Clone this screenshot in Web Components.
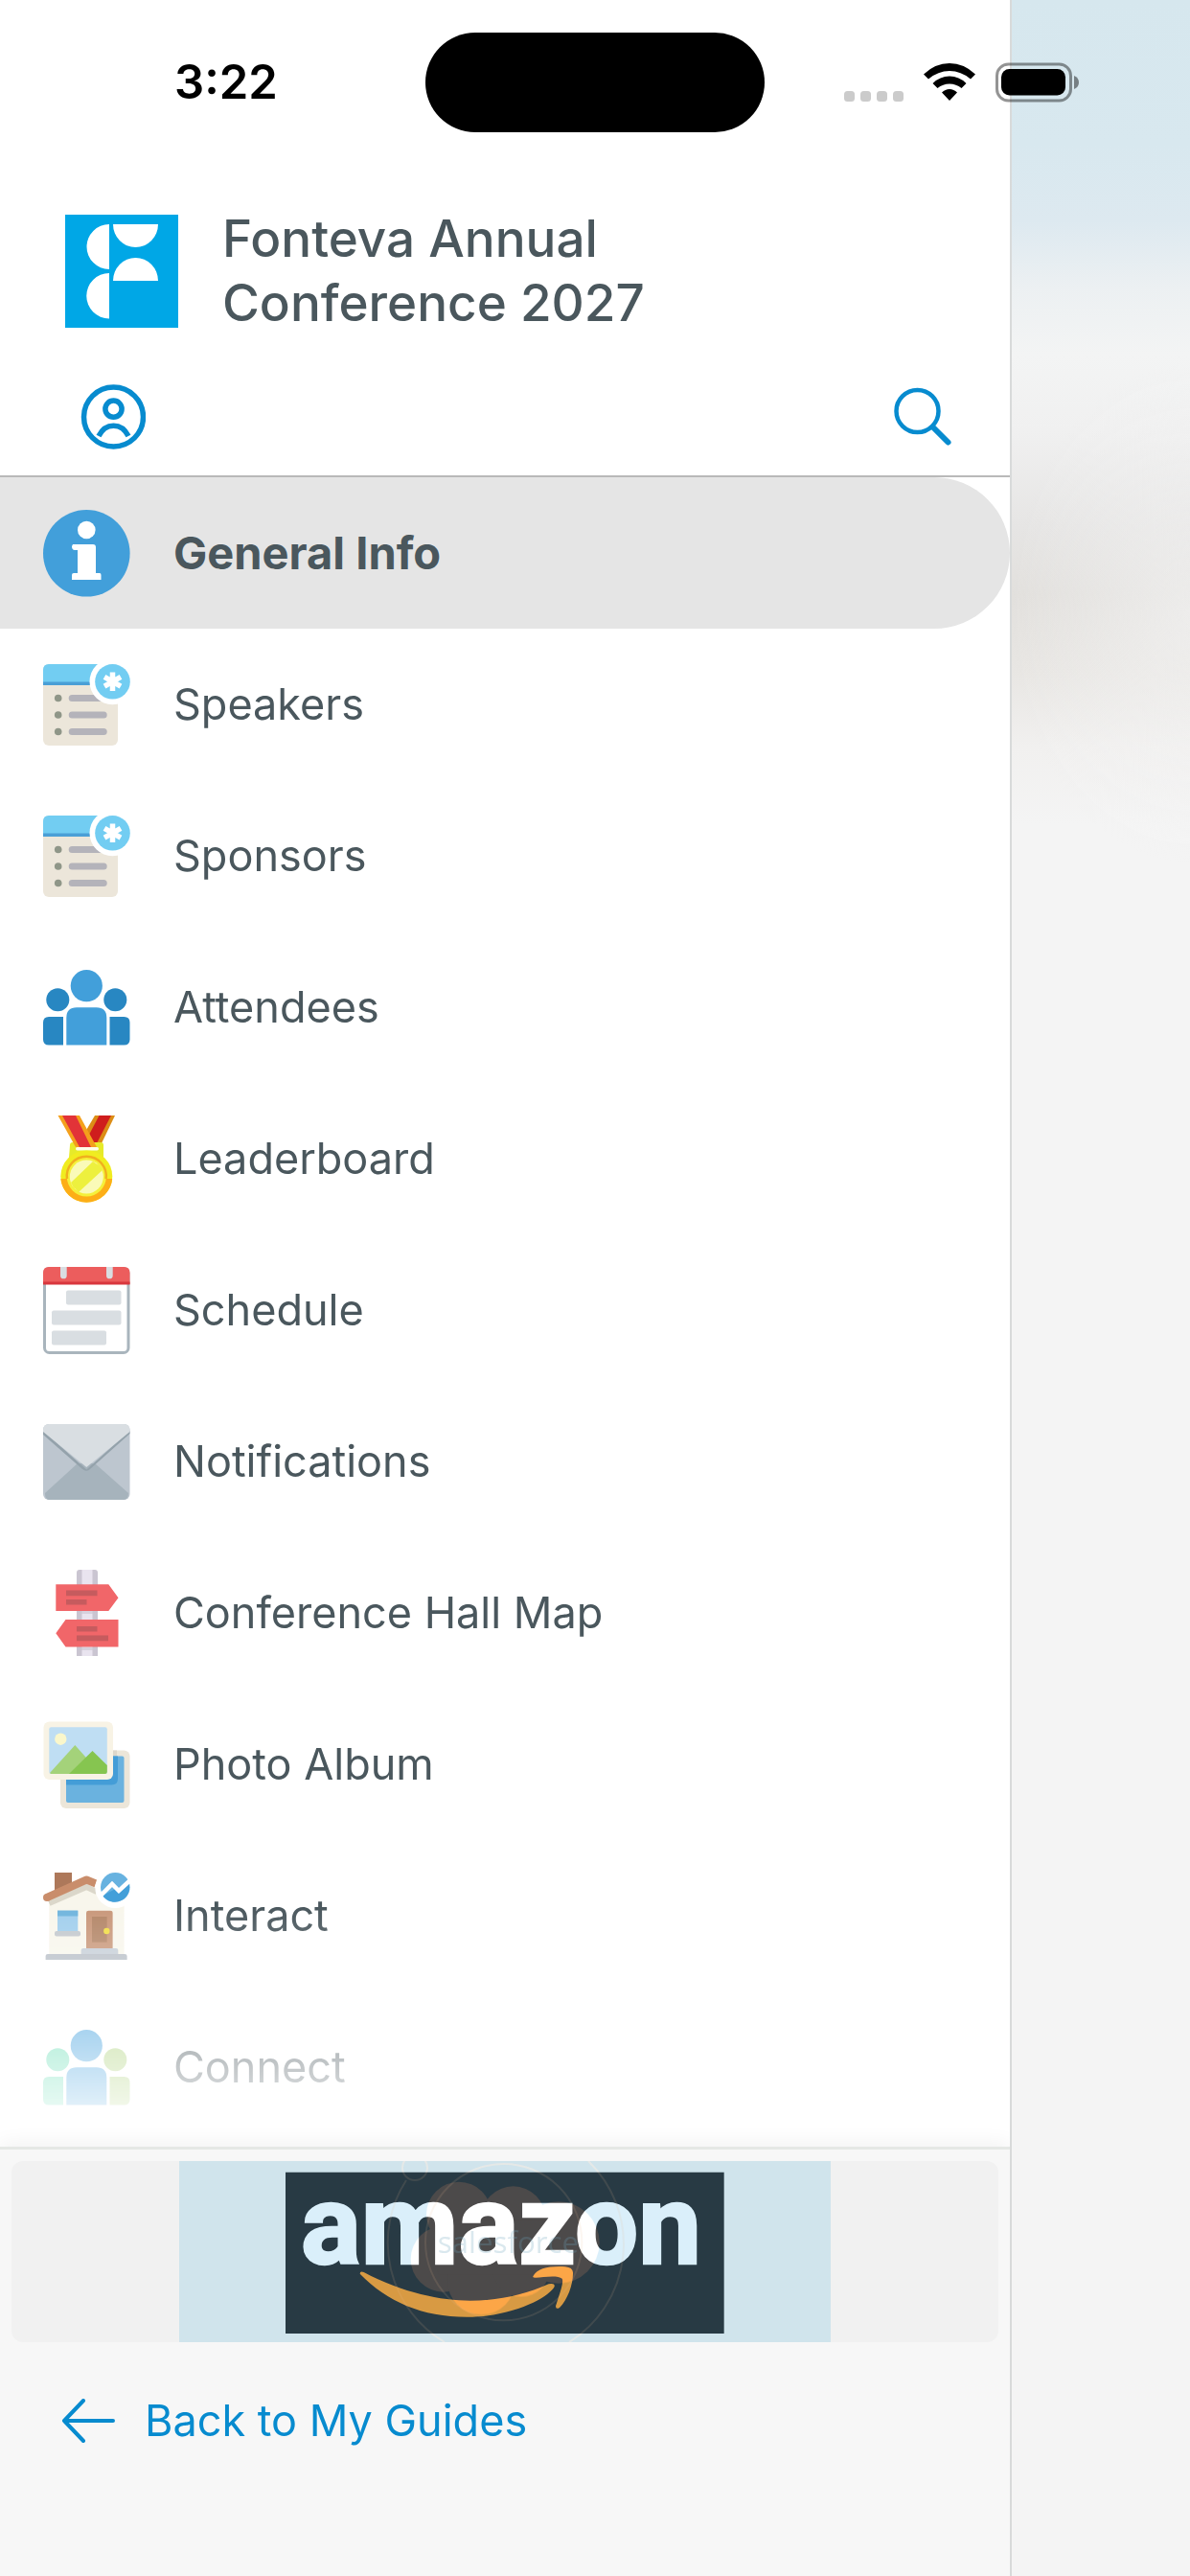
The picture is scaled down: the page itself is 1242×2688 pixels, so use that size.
<!DOCTYPE html>
<html lang="en">
<head>
<meta charset="utf-8">
<meta name="viewport" content="width=device-width, initial-scale=1">
<title>Fonteva Annual Conference 2027</title>
<style>
  body {
    margin: 0;
    background: #f4f4f4;
    color: #4a575d;
    font-family: Inter, "Liberation Sans", sans-serif;
  }
</style>
</head>
<body>
<guide-app>
  <status-bar slot="status"></status-bar>
  <guide-header slot="drawer">Fonteva Annual Conference 2027</guide-header>
  <guide-menu slot="drawer">
    <guide-item icon="info" selected>General Info</guide-item>
    <guide-item icon="list">Speakers</guide-item>
    <guide-item icon="list">Sponsors</guide-item>
    <guide-item icon="people">Attendees</guide-item>
    <guide-item icon="medal">Leaderboard</guide-item>
    <guide-item icon="calendar">Schedule</guide-item>
    <guide-item icon="mail">Notifications</guide-item>
    <guide-item icon="signpost">Conference Hall Map</guide-item>
    <guide-item icon="photos">Photo Album</guide-item>
    <guide-item icon="house">Interact</guide-item>
    <guide-item icon="connect">Connect</guide-item>
  </guide-menu>
  <guide-footer slot="drawer">
    <sponsor-banner></sponsor-banner>
    <back-link slot="link">Back to My Guides</back-link>
  </guide-footer>
</guide-app>

<script>
const people = (left, middle, right) => `
  <circle cx="15.3" cy="37.3" r="12" fill="${left}"/>
  <path d="M21 55V84.500H6Q0 84.500 0 78.500V61Q0 55 6 55Z" fill="${left}"/>
  <circle cx="75.300" cy="37.300" r="12" fill="${right}"/>
  <path d="M69.500 55H84.500Q90.500 55 90.500 61V78.500Q90.500 84.500 84.500 84.500H69.500Z" fill="${right}"/>
  <circle cx="45.300" cy="22.700" r="16.600" fill="${middle}"/>
  <path d="M24.300 84.500V56Q24.300 45.300 35 45.300H55.600Q66.300 45.300 66.300 56V84.500Z" fill="${middle}"/>`;

const icons = {
  info: `
    <circle cx="45.300" cy="45.300" r="45.300" fill="#429fda"/>
    <circle cx="45.300" cy="21" r="9.300" fill="#fff"/>
    <path d="M31 36H52Q55 36 55 39V66H59Q60.500 66 60.500 68V73H30V68Q30 66 32 66H36V42H33Q30 42 30 38Z" fill="#fff"/>`,
  list: `
    <rect x="0" y="3" width="78" height="85" rx="6" fill="#ece6da"/>
    <path d="M0 22V9Q0 3 6 3H78V22Z" fill="#72cdf2"/>
    <path d="M0 21.500H60V25H0Z" fill="#4a9fd6"/>
    <g fill="#8f9688"><circle cx="15.700" cy="38.500" r="3.800"/><circle cx="15.700" cy="56" r="3.800"/><circle cx="15.700" cy="73.500" r="3.800"/></g>
    <g fill="#b4b3ba">
      <rect x="26.700" y="35" width="40" height="7" rx="3.500"/>
      <rect x="26.700" y="52.500" width="40" height="7" rx="3.500"/>
      <rect x="26.700" y="70" width="40" height="7" rx="3.500"/>
    </g>
    <path d="M66 0H91V30H78Z" fill="#fff"/>
    <circle cx="72.500" cy="21.300" r="24" fill="#fff"/>
    <circle cx="72.500" cy="21.300" r="18.300" fill="#72cdf2"/>
    <path d="M72.500 11.500V31M64 16.400L81 26.200M64 26.200L81 16.400" stroke="#fff" stroke-width="5.500"/>`,
  people: people('#2887c2', '#429fda', '#2887c2'),
  connect: people('#6edeb7', '#4fa6df', '#afd27f'),
  medal: `
    <path d="M54 0H75L61 29H50L44 17Z" fill="#dc8d16"/>
    <path d="M58.500 0H71L56.500 28H52L48 20Z" fill="#cf1d1d"/>
    <path d="M28 31Q28 28 31 28H60Q63 28 63 31V44H27Z" fill="#e6ea2a"/>
    <path d="M15.500 0H38L56 33H34Z" fill="#f4a01c"/>
    <path d="M20 0H34L50 33H38Z" fill="#e23338"/>
    <rect x="34" y="33" width="24" height="3.500" rx="1.700" fill="#fffde8"/>
    <circle cx="45.300" cy="63.500" r="27" fill="#f0ec20"/>
    <path d="M18.400 66A27 27 0 0 0 72.200 66Z" fill="#fdae17"/>
    <circle cx="45.300" cy="64" r="20.500" fill="#f5f03a"/>
    <path d="M25 66A20.500 20.500 0 1 1 65.600 66" fill="none" stroke="#f0b01e" stroke-width="2.500"/>
    <circle cx="45.300" cy="64" r="17.500" fill="#fafab8"/>
    <path d="M29 70L52 48L58 52L32 76Z" fill="#edf03e"/>
    <path d="M32 75L58 51L62 57L37 80Z" fill="#edf03e"/>`,
  calendar: `
    <rect x="1.500" y="1.500" width="87.500" height="88" rx="5" fill="#fff" stroke="#a9b5bd" stroke-width="3"/>
    <path d="M0 18V6Q0 0 6 0H84.500Q90.500 0 90.500 6V18Z" fill="#ec5d5d"/>
    <path d="M0 15.500H90.500V18.500H0Z" fill="#d8373d"/>
    <path d="M18 0H24.700V9A3.300 3.300 0 0 1 18 9ZM66 0H72.700V9A3.300 3.300 0 0 1 66 9Z" fill="#d9dde1"/>
    <g fill="#d9dee2">
      <rect x="24" y="24.500" width="57.500" height="15" rx="2"/>
      <rect x="9" y="45.500" width="72.500" height="15" rx="2"/>
      <rect x="9" y="66.500" width="57" height="15" rx="2"/>
    </g>`,
  mail: `
    <rect x="0" y="6" width="90.500" height="79" rx="6" fill="#bdc6cf"/>
    <path d="M2 78L36 47H54L89 78Q89 85 84 85H6Q2 85 2 78Z" fill="#a6b3bc"/>
    <path d="M0 13L45.300 53.500L90.500 13V16L49 53Q45.300 56.500 41 53L0 17Z" fill="#94a2ab"/>
    <path d="M0 14V12Q0 6 6 6H84.500Q90.500 6 90.500 12V14L45.300 51Z" fill="#d9dee2"/>`,
  signpost: `
    <path d="M35 90V3Q35 0 38 0H54Q57 0 57 3V90Z" fill="#cac5d1"/>
    <path d="M40.500 0H51.500V90H40.500Z" fill="#e9e4ef"/>
    <path d="M35 43H57V46H35ZM35 81H57V84H35Z" fill="#cac5d1" opacity=".6"/>
    <path d="M13.300 15.300H68.300L78.500 29.300L68.300 43H13.300ZM23.500 52H78.500V80.600H23.500L13.300 66.300Z" fill="#f16669"/>
    <path d="M24 21.600H56.500V27.300H24ZM24 31H45.500V36.600H24ZM35 59H56.500V64.600H35ZM35 68.600H68V74.300H35Z" fill="#c65b5e"/>`,
  photos: `
    <rect x="18" y="30.500" width="72.500" height="60.500" rx="6" fill="#ece6d9"/>
    <path d="M72 30.500H77V37H72Z" fill="#ddd7ca"/>
    <rect x="24" y="36.500" width="60.500" height="48.500" rx="2" fill="#6ab2df"/>
    <path d="M24 36.500H78V60Q78 66.500 71.500 66.500H24Z" fill="#449dd7"/>
    <rect x="0.500" y="0.500" width="72.500" height="60.500" rx="6" fill="#f8f3e5"/>
    <rect x="6.300" y="6.300" width="60.500" height="48.700" rx="2" fill="#bfdef3"/>
    <circle cx="18.300" cy="18.700" r="6.200" fill="#faf7cb"/>
    <path d="M7 54L33.300 25L60 55H8Z" fill="#a4d27a"/>
    <path d="M27 55L51.500 31L66.800 46V53Q66.800 55 64.800 55Z" fill="#86c550"/>`,
  house: `
    <path d="M12 0H30V16L12 24Z" fill="#ad785a"/>
    <path d="M6.300 30L45.300 12L84.600 31V86H6.300Z" fill="#f8f6ec"/>
    <path d="M6.300 32L45.300 15L56 20" fill="none" stroke="#dbd7ca" stroke-width="6"/>
    <path d="M4 26L45.300 7.500L55 11.500" fill="none" stroke="#c98d6b" stroke-width="8" stroke-linejoin="round"/>
    <circle cx="4" cy="26" r="4" fill="#c98d6b"/>
    <circle cx="75.300" cy="16" r="21" fill="#fff"/>
    <circle cx="75.300" cy="15.300" r="15.300" fill="#67b2e0"/>
    <path d="M62 24L89 10A15.300 15.300 0 0 1 62 24Z" fill="#439fd9"/>
    <path d="M60 24L72 12L79 19L91 8" fill="none" stroke="#fff" stroke-width="4.500"/>
    <path d="M15 40H36.300V61H15Z" fill="#a2cfed"/>
    <path d="M15 39.500H36.300V45.500H15Z" fill="#71b5dd"/>
    <rect x="12" y="61" width="27" height="5.500" rx="2" fill="#c4c9ce"/>
    <path d="M45 79V42Q45 39.700 47.500 39.700H70Q72.600 39.700 72.600 42V79Z" fill="#c9987b"/>
    <path d="M51 46H66.600V72.600H51Z" fill="#b48769"/>
    <circle cx="66.300" cy="61" r="3.200" fill="#f2df48"/>
    <path d="M39.600 85V81Q39.600 79 42 79H76Q78.300 79 78.300 81V85Z" fill="#c6cfd8"/>
    <path d="M2.600 91V87Q2.600 85 5 85H85Q87.600 85 87.600 87V91Z" fill="#b9c0c8"/>`
};

class GuideApp extends HTMLElement {
  constructor() {
    super();
    this.attachShadow({ mode: 'open' }).innerHTML = `
      <style>
        :host {
          display: flex;
          position: relative;
          min-height: 100vh;
        }
        .drawer {
          flex: 0 0 85%;
          box-sizing: border-box;
          display: flex;
          flex-direction: column;
          border-right: 2px solid #d8dada;
          background: #fff;
        }
        /* what is left of the page under the open drawer */
        .page {
          flex: 1;
          background:
            radial-gradient(ellipse 100% 260px at 100% 640px, rgba(244, 244, 244, .6), rgba(244, 244, 244, 0)),
            linear-gradient(#d6e7ee 0, #d8e8ef 150px, #dde9f0 230px, #ecf0f2 300px, #f3f4f4 370px,
              #f0f0f0 450px, #e6e5e4 550px, #e2e0dd 620px, #e8e6e3 700px, #f1f0ef 780px, #f4f4f4 860px);
        }
      </style>
      <slot name="status"></slot>
      <div class="drawer"><slot name="drawer"></slot></div>
      <div class="page"></div>
    `;
  }
}

class StatusBar extends HTMLElement {
  constructor() {
    super();
    this.attachShadow({ mode: 'open' }).innerHTML = `
      <style>
        :host {
          position: absolute;
          top: 34px;
          left: 0;
          right: 0;
          display: grid;
          grid-template-columns: 1fr 354px 1fr;
          align-items: center;
          color: #000;
        }
        time {
          padding-left: 182px;
          font-size: 49px;
          line-height: 60px;
          font-weight: 600;
        }
        .island {
          height: 104px;
          border-radius: 52px;
          background: #000;
        }
        .signals {
          display: flex;
          align-items: flex-end;
          gap: 21px;
          padding-left: 83px;
        }
        svg {
          display: block;
          flex: none;
        }
      </style>
      <time>3:22</time>
      <div class="island"></div>
      <div class="signals">
        <svg width="62" height="42" viewBox="0 0 62 42" fill="#cbcbcb">
          <rect x="0" y="30" width="11" height="11" rx="3.500"/><rect x="17" y="30" width="11" height="11" rx="3.500"/>
          <rect x="34" y="30" width="11" height="11" rx="3.500"/><rect x="51" y="30" width="11" height="11" rx="3.500"/>
        </svg>
        <svg width="54" height="42" viewBox="0 0 54 42">
          <path d="M0 12.500Q12 1 27 1T54 12.500L49 17.500Q39 9 27 9T5 17.500ZM9.500 22Q17 14.500 27 14.500T44.500 22L39.500 27Q34 22.500 27 22.500T14.500 27ZM19 31.500Q22.500 28 27 28T35 31.500L27 40Z"/>
        </svg>
        <svg width="88" height="42" viewBox="0 0 88 42">
          <rect x="1.500" y="2" width="77" height="38" rx="12" fill="none" stroke="#000" stroke-opacity=".42" stroke-width="3"/>
          <rect x="6" y="7" width="67" height="27.500" rx="8.500"/>
          <path d="M82 14V28Q87 26 87 21T82 14Z" fill-opacity=".45"/>
        </svg>
      </div>
    `;
  }
}

class GuideHeader extends HTMLElement {
  constructor() {
    super();
    this.attachShadow({ mode: 'open' }).innerHTML = `
      <style>
        :host {
          display: block;
          padding: 216px 60px 27px 68px;
          border-bottom: 2px solid #b9b9b9;
        }
        .brand {
          display: flex;
          align-items: center;
          gap: 46px;
        }
        h1 {
          max-width: 600px;
          margin: 0;
          font-size: 53px;
          line-height: 67px;
          font-weight: 500;
        }
        .tools {
          display: flex;
          justify-content: space-between;
          margin-top: 51px;
          padding-left: 16px;
        }
        button {
          padding: 0;
          border: 0;
          background: none;
          color: #078bcf;
        }
        svg {
          display: block;
          flex: none;
        }
      </style>
      <div class="brand">
        <svg width="118" height="118" viewBox="0 0 118 118">
          <path d="M0 0H118V118H0Z" fill="#00a7e6"/>
          <path d="M46 10V57A23.500 23.500 0 0 1 46 10ZM46 61V108.500A23.500 23.500 0 0 1 46 61ZM50 10H97A23.500 24 0 0 1 50 10ZM50 69A23.500 24 0 0 1 97 69Z" fill="#fff"/>
        </svg>
        <h1><slot></slot></h1>
      </div>
      <div class="tools">
        <button aria-label="My profile">
          <svg width="68" height="68" viewBox="0 0 68 68" fill="none" stroke="currentColor" stroke-width="5.500">
            <circle cx="34.500" cy="34" r="31"/>
            <circle cx="34.500" cy="25.700" r="8.600"/>
            <path d="M19 54C26 39.500 43 39.500 50 54"/>
          </svg>
        </button>
        <button aria-label="Search">
          <svg width="68" height="68" viewBox="0 0 68 68" fill="none" stroke="currentColor" stroke-linecap="round">
            <circle cx="31.500" cy="28" r="22" stroke-width="4.500"/>
            <path d="M48 45L63.500 60.500" stroke-width="6"/>
          </svg>
        </button>
      </div>
    `;
  }
}

class GuideMenu extends HTMLElement {
  constructor() {
    super();
    this.attachShadow({ mode: 'open' }).innerHTML = `
      <style>
        :host {
          display: block;
          padding-bottom: 4px;
          -webkit-mask-image: linear-gradient(to top, transparent, #000 250px);
          mask-image: linear-gradient(to top, transparent, #000 250px);
        }
      </style>
      <nav><slot></slot></nav>
    `;
  }
}

class GuideItem extends HTMLElement {
  connectedCallback() {
    this.attachShadow({ mode: 'open' }).innerHTML = `
      <style>
        :host {
          display: block;
        }
        a {
          display: flex;
          align-items: center;
          gap: 45px;
          height: 158px;
          padding-left: 45px;
          color: inherit;
          font-size: 45px;
          line-height: 60px;
          text-decoration: none;
        }
        :host([selected]) a {
          border-radius: 0 79px 79px 0;
          background: #e5e5e5;
          font-size: 47px;
          font-weight: 700;
        }
        svg {
          flex: none;
        }
      </style>
      <a href="#"><svg width="91" height="91" viewBox="0 0 91 91">${icons[this.getAttribute('icon')]}</svg><slot></slot></a>
    `;
  }
}

class GuideFooter extends HTMLElement {
  constructor() {
    super();
    this.attachShadow({ mode: 'open' }).innerHTML = `
      <style>
        :host {
          position: relative;
          flex: 1;
          display: flex;
          flex-direction: column;
          gap: 52px;
          padding: 12px 12px 132px;
          border-top: 3px solid #e5e8e5;
          background: #f7f7f7;
          box-shadow: 0 -3px 20px rgba(0, 0, 0, .06);
          clip-path: inset(-40px 0 0 0);
        }
      </style>
      <slot></slot>
      <slot name="link"></slot>
    `;
  }
}

class SponsorBanner extends HTMLElement {
  constructor() {
    super();
    this.attachShadow({ mode: 'open' }).innerHTML = `
      <style>
        :host {
          display: flex;
          justify-content: center;
          border-radius: 12px;
          background: #f1f1f1;
        }
        svg {
          display: block;
          width: 680px;
          max-width: 100%;
        }
      </style>
      <svg viewBox="-291 45 2040 567">
        <defs>
          <g id="cloud">
            <circle cx="585" cy="212" r="102"/><circle cx="755" cy="225" r="101"/>
            <circle cx="897" cy="300" r="128"/><circle cx="537" cy="352" r="103"/>
            <circle cx="655" cy="420" r="106"/><circle cx="780" cy="380" r="90"/>
            <path d="M500 230H880V400H520Z"/>
          </g>
          <pattern id="letters" patternUnits="userSpaceOnUse" width="2400" height="700">
            <path d="M0 0H2400V700H0Z" fill="#daeffa"/><use href="#cloud" fill="#fff"/>
          </pattern>
          <pattern id="smile" patternUnits="userSpaceOnUse" width="2400" height="700">
            <path d="M0 0H2400V700H0Z" fill="#d89a43"/><use href="#cloud" fill="#fca647"/>
          </pattern>
          <g id="rings" fill="none" stroke-width="6">
            <circle cx="725" cy="299" r="245"/><circle cx="447" cy="66" r="39"/>
            <path d="M420 105A361 361 0 0 0 540 612M930 612A361 361 0 0 0 990 45"/>
          </g>
        </defs>
        <path d="M-291 45H1749V612H-291Z" fill="#d0e4ec"/>
        <use href="#rings" stroke="#fff" stroke-opacity=".45"/>
        <path d="M42 80H1415V585H42Z" fill="#283a44"/>
        <use href="#cloud" fill="#4c4a4a"/>
        <text x="90" y="366" font-family="Roboto, Liberation Sans, sans-serif" font-weight="700" font-size="352" fill="url(#letters)" stroke="url(#letters)" stroke-width="8">amazon</text>
        <path d="M275 398Q275 388 287 393C410 458 530 482 620 482C710 482 790 464 866 430Q886 426 884 438C870 468 760 533 610 533C470 533 360 485 275 398ZM817 406C830 380 870 373 918 376Q941 378 942 394C943 430 925 480 900 504Q888 511 888 499C900 460 914 424 908 413C895 401 850 408 825 410Q815 410 817 406Z" fill="url(#smile)"/>
        <use href="#rings" stroke="#e8b890" stroke-opacity=".13"/>
        <text x="518" y="333" font-family="Open Sans, sans-serif" font-size="94" fill="#6aa5bd" fill-opacity=".25">salesforce</text>
      </svg>
    `;
  }
}

class BackLink extends HTMLElement {
  constructor() {
    super();
    this.attachShadow({ mode: 'open' }).innerHTML = `
      <style>
        :host {
          display: block;
          padding-left: 52px;
        }
        a {
          display: inline-flex;
          align-items: center;
          gap: 30px;
          color: #078bcf;
          font-size: 45px;
          line-height: 60px;
          text-decoration: none;
        }
      </style>
      <a href="#">
        <svg width="57" height="46" viewBox="0 0 57 46" fill="none" stroke="currentColor" stroke-width="4" stroke-linecap="round" stroke-linejoin="round">
          <path d="M54 23H3M23 2L3 23L23 44"/>
        </svg>
        <slot></slot>
      </a>
    `;
  }
}

customElements.define('guide-app', GuideApp);
customElements.define('status-bar', StatusBar);
customElements.define('guide-header', GuideHeader);
customElements.define('guide-menu', GuideMenu);
customElements.define('guide-item', GuideItem);
customElements.define('guide-footer', GuideFooter);
customElements.define('sponsor-banner', SponsorBanner);
customElements.define('back-link', BackLink);
</script>
</body>
</html>
